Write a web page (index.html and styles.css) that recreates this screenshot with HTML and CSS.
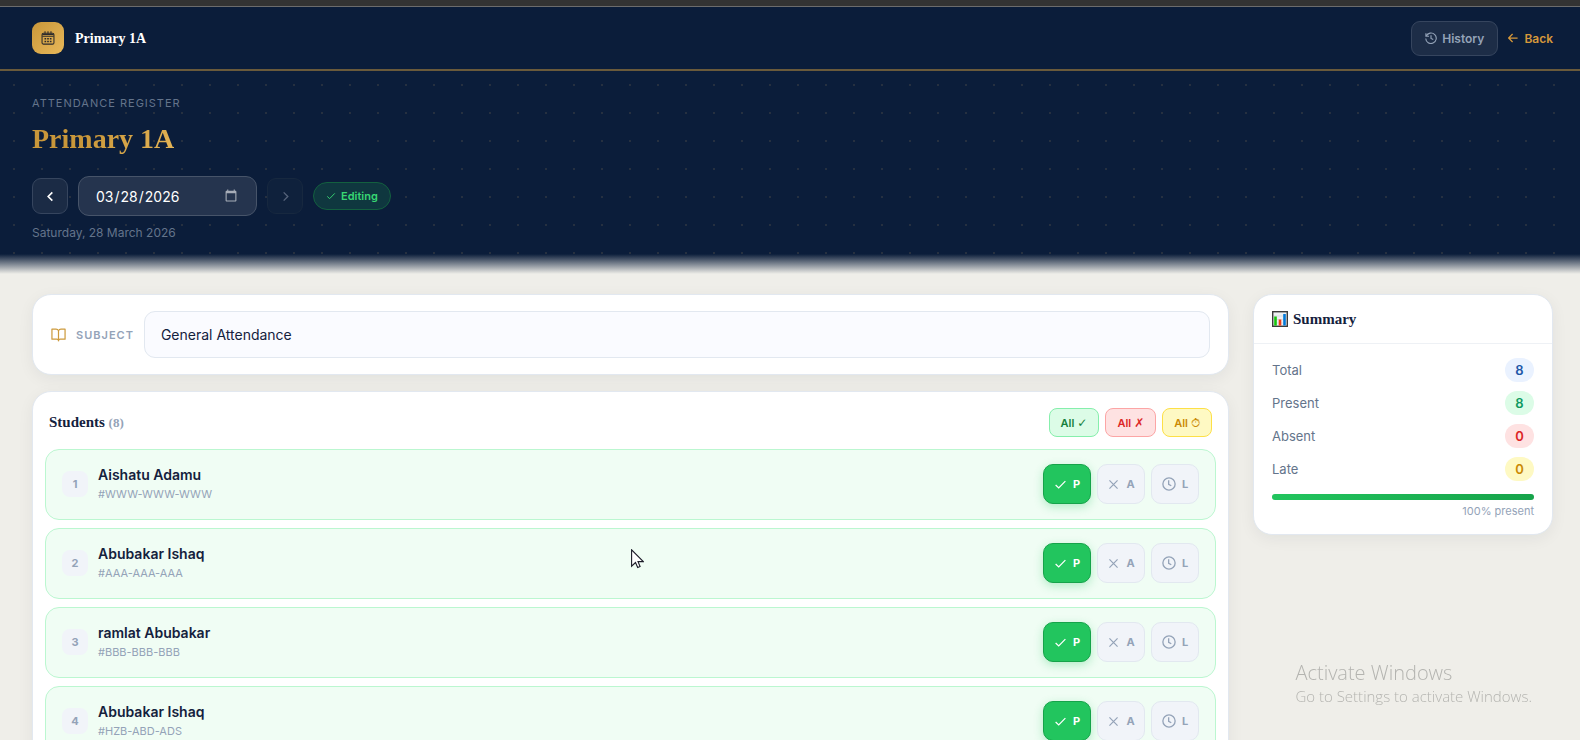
FILE: index.html
```html
<!DOCTYPE html>
<html lang="en">
<head>
<meta charset="utf-8">
<title>Attendance Register – Primary 1A</title>
<meta name="viewport" content="width=device-width, initial-scale=1">
<link rel="stylesheet" href="styles.css">
</head>
<body>
<svg class="defs" aria-hidden="true">
  <symbol id="check" viewBox="0 0 16 16"><path d="M2 8.6 5.8 12.2 14 3.8"/></symbol>
  <symbol id="cross" viewBox="0 0 16 16"><path d="M3 3l10 10M13 3 3 13"/></symbol>
  <symbol id="clock" viewBox="0 0 16 16"><circle cx="8" cy="8" r="7"/><path d="M7.6 3.8v4.5l3 1.7"/></symbol>
</svg>
<div class="strip"></div>
<header class="topbar">
  <div class="brand">
    <span class="brand-logo">
      <svg viewBox="0 0 16 16" width="14" height="14" fill="none" stroke="#2b2a2c" stroke-width="1.2"><rect x="1.2" y="2.6" width="13.6" height="12.4" rx="1.6"/><path d="M1.500 4h13M1.500 6h13M4.600.4v2.600M8 .4v2.600M11.400.4v2.600"/><path d="M4 8.900h1.900M7.050 8.900h1.900M10.100 8.900H12M4 11.900h1.900M7.050 11.900h1.900M10.100 11.900H12" stroke-width="1.700"/></svg>
    </span>
    <span class="brand-name">Primary 1A</span>
  </div>
  <nav class="nav">
    <button class="history" type="button">
      <svg viewBox="0 0 16 16" width="12" height="12" fill="none" stroke="currentColor" stroke-width="1.5"><path d="M1.2 1.5v4.2h4.2M1.6 5.5A7 7 0 1 1 1 8.6"/><path d="M8 4.2v4.3l3 1.6"/></svg>
      History
    </button>
    <a class="back" href="#">
      <svg viewBox="0 0 12 12" width="10" height="10" fill="none" stroke="currentColor" stroke-width="1.5"><path d="M11.5 6H1M5.5 1.2.8 6l4.7 4.8"/></svg>
      Back
    </a>
  </nav>
</header>
<section class="hero">
  <p class="eyebrow">Attendance Register</p>
  <h1 class="title">Primary 1A</h1>
  <div class="date-row">
    <button class="step" type="button" aria-label="Previous day"><svg viewBox="0 0 12 12" width="11" height="11" fill="none" stroke="currentColor" stroke-width="1.8"><path d="M8 1.5 3.5 6 8 10.5"/></svg></button>
    <input class="date" type="date" value="2026-03-28" aria-label="Attendance date">
    <button class="step step-off" type="button" aria-label="Next day" disabled><svg viewBox="0 0 12 12" width="11" height="11" fill="none" stroke="currentColor" stroke-width="1.5"><path d="M4 1.5 8.5 6 4 10.5"/></svg></button>
    <span class="editing"><svg class="line-icon" width="10" height="10"><use href="#check"/></svg>Editing</span>
  </div>
  <p class="long-date">Saturday, 28 March 2026</p>
</section>
<main class="content">
  <div class="column">
    <section class="card subject">
      <svg viewBox="0 0 16 14" width="15" height="14" fill="none" stroke="#cd9a3c" stroke-width="1.3" stroke-linejoin="round"><path d="M8 2.600C7.500 1.400 6.600.8 5.400.8H1v10.600h5c1.100 0 2 .6 2 1.800 0-1.200.9-1.800 2-1.800h5V.8h-4.400C9.400.8 8.500 1.400 8 2.600zv11"/></svg>
      <label class="subject-label" for="subject">Subject</label>
      <select class="subject-select" id="subject"><option>General Attendance</option></select>
    </section>
    <section class="card students">
      <div class="students-head">
        <h2 class="card-title">Students <span class="count">(8)</span></h2>
        <div class="bulk">
          <button class="bulk-btn green" type="button">All <span class="glyph">✓</span></button>
          <button class="bulk-btn red" type="button">All <span class="glyph">✗</span></button>
          <button class="bulk-btn yellow" type="button">All <span class="glyph">⏱</span></button>
        </div>
      </div>
      <ul class="list">
        <li class="row">
          <span class="num">1</span>
          <div class="who"><span class="name">Aishatu Adamu</span><span class="code">#WWW-WWW-WWW</span></div>
          <div class="marks">
            <button class="mark on" type="button"><svg class="line-icon" width="13" height="13"><use href="#check"/></svg>P</button>
            <button class="mark" type="button"><svg class="line-icon" width="13" height="13"><use href="#cross"/></svg>A</button>
            <button class="mark" type="button"><svg class="line-icon" width="14" height="14"><use href="#clock"/></svg>L</button>
          </div>
        </li>
        <li class="row">
          <span class="num">2</span>
          <div class="who"><span class="name">Abubakar Ishaq</span><span class="code">#AAA-AAA-AAA</span></div>
          <div class="marks">
            <button class="mark on" type="button"><svg class="line-icon" width="13" height="13"><use href="#check"/></svg>P</button>
            <button class="mark" type="button"><svg class="line-icon" width="13" height="13"><use href="#cross"/></svg>A</button>
            <button class="mark" type="button"><svg class="line-icon" width="14" height="14"><use href="#clock"/></svg>L</button>
          </div>
        </li>
        <li class="row">
          <span class="num">3</span>
          <div class="who"><span class="name">ramlat Abubakar</span><span class="code">#BBB-BBB-BBB</span></div>
          <div class="marks">
            <button class="mark on" type="button"><svg class="line-icon" width="13" height="13"><use href="#check"/></svg>P</button>
            <button class="mark" type="button"><svg class="line-icon" width="13" height="13"><use href="#cross"/></svg>A</button>
            <button class="mark" type="button"><svg class="line-icon" width="14" height="14"><use href="#clock"/></svg>L</button>
          </div>
        </li>
        <li class="row">
          <span class="num">4</span>
          <div class="who"><span class="name">Abubakar Ishaq</span><span class="code">#HZB-ABD-ADS</span></div>
          <div class="marks">
            <button class="mark on" type="button"><svg class="line-icon" width="13" height="13"><use href="#check"/></svg>P</button>
            <button class="mark" type="button"><svg class="line-icon" width="13" height="13"><use href="#cross"/></svg>A</button>
            <button class="mark" type="button"><svg class="line-icon" width="14" height="14"><use href="#clock"/></svg>L</button>
          </div>
        </li>
      </ul>
    </section>
  </div>
  <aside class="card summary">
    <h2 class="card-title summary-title">
      <svg viewBox="0 0 16 16" width="16" height="16"><rect x=".7" y=".7" width="14.600" height="14.600" fill="#eef0f2" stroke="#3b3b3b" stroke-width="1.400"/><path d="M2 5h12M2 8.500h12M2 12h12" stroke="#cfd4d9" stroke-width=".6"/><path d="M2.200 5.500h2.600V14.600H2.200z" fill="#16c60c"/><path d="M6.700 8.500h2.600v6.100H6.700z" fill="#f03a17"/><path d="M11.200 3h2.600v11.600h-2.600z" fill="#0078d7"/></svg>
      Summary
    </h2>
    <dl class="stats">
      <div class="stat"><dt>Total</dt><dd class="pill blue">8</dd></div>
      <div class="stat"><dt>Present</dt><dd class="pill green-pill">8</dd></div>
      <div class="stat"><dt>Absent</dt><dd class="pill red-pill">0</dd></div>
      <div class="stat"><dt>Late</dt><dd class="pill yellow-pill">0</dd></div>
    </dl>
    <div class="progress"><div class="progress-fill" style="width:100%"></div></div>
    <p class="progress-text">100% present</p>
  </aside>
</main>
<div class="watermark"><p class="wm-title">Activate Windows</p><p class="wm-text">Go to Settings to activate Windows.</p></div>
<svg class="cursor" viewBox="0 0 13 20" width="13" height="20"><path d="M.6.8v16.400l3.900-3.700 2.200 5 2.400-1-2.100-4.900h5.300z" fill="#fff" stroke="#1c1c28" stroke-width="1.100"/></svg>
</body>
</html>
```
FILE: styles.css
```css
* { box-sizing: border-box; }

html { height: 100%; overflow: hidden; }

body {
  margin: 0;
  height: 100%;
  overflow: hidden;
  background: #efeee9;
  color: #14213d;
  font-family: Inter, "Liberation Sans", sans-serif;
  font-size: 13px;
}

p, h1, h2, ul, dl, dd { margin: 0; padding: 0; }
button, input, select { font: inherit; }
svg { flex: none; }

.defs { display: none; }
.line-icon { fill: none; stroke: currentColor; stroke-width: 1.5; }

.strip { height: 7px; background: #333; border-bottom: 1px solid #6c6c6c; }

.topbar {
  display: flex;
  align-items: center;
  justify-content: space-between;
  height: 64px;
  padding: 0 27px 0 32px;
  background: #0b1d3a;
  border-bottom: 2px solid #6a5a3b;
}
.brand { display: flex; align-items: center; gap: 11px; }
.brand-logo {
  display: grid;
  place-items: center;
  width: 32px;
  height: 32px;
  border-radius: 9px;
  background: linear-gradient(135deg, #c9973a, #e8b85a);
}
.brand-name {
  padding-top: 2px;
  color: #fff;
  font: bold 14px/20px "Liberation Serif", serif;
}
.nav { display: flex; align-items: center; gap: 10px; font-size: 12px; font-weight: 600; }
.history {
  display: flex;
  align-items: center;
  gap: 5px;
  height: 35px;
  padding: 0 13px;
  border: 1px solid #36455e;
  border-radius: 9px;
  background: #1d2d47;
  color: #94a3b8;
}
.back { display: flex; align-items: center; gap: 6px; color: #d6983a; text-decoration: none; }

.hero {
  position: relative;
  height: 203px;
  padding: 24px 32px 0;
  background: radial-gradient(circle, #263040 1px, transparent 1px) 0 0 / 28px 28px, #0b1d3a;
  color: #64748b;
}
.hero::after {
  content: "";
  position: absolute;
  inset: auto 0 0;
  height: 20px;
  background: linear-gradient(to bottom, #0b1d3a, #efeee9);
}
.eyebrow { font-size: 11px; line-height: 16px; letter-spacing: 1px; text-transform: uppercase; }
.title {
  width: max-content;
  margin-top: 8px;
  font: bold 28px/40px "Liberation Serif", serif;
  background: linear-gradient(135deg, #c9973a 40%, #e8b85a);
  background-clip: text;
  color: transparent;
}
.date-row { display: flex; align-items: center; gap: 10px; margin-top: 17px; }
.step {
  display: grid;
  place-items: center;
  width: 36px;
  height: 36px;
  padding: 0;
  border: 1px solid #36455e;
  border-radius: 9px;
  background: #1b2b45;
  color: #fff;
}
.step-off { border-color: #17283f; background: #0f213c; color: #56637a; }
.date {
  width: 179px;
  height: 40px;
  padding: 0 16px;
  border: 1px solid #475469;
  border-radius: 11px;
  background: #25344e;
  color: #fff;
  color-scheme: dark;
  font-size: 14px;
}
.date::-webkit-calendar-picker-indicator { opacity: .6; }
.editing {
  display: flex;
  align-items: center;
  gap: 5px;
  height: 28px;
  padding: 0 12px;
  border: 1px solid #13603f;
  border-radius: 14px;
  background: #0f373f;
  color: #38d673;
  font-size: 11px;
  font-weight: 600;
}
.long-date { margin-top: 9px; font-size: 12px; line-height: 16px; }

.content {
  display: grid;
  grid-template-columns: minmax(0, 1fr) 300px;
  align-items: start;
  gap: 24px;
  padding: 20px 27px 0 32px;
}
.column { display: grid; gap: 16px; }
.card {
  border: 1px solid #e2e8f0;
  border-radius: 19px;
  background: #fff;
  box-shadow: 0 4px 16px rgba(11, 29, 58, .06);
}
.card-title { font: bold 15px/20px "Liberation Serif", serif; }

.subject { display: flex; align-items: center; gap: 10px; padding: 16px 18px; }
.subject-label { color: #94a3b8; font-size: 11px; font-weight: 600; letter-spacing: 1px; text-transform: uppercase; }
.subject-select {
  appearance: none;
  flex: 1;
  min-width: 0;
  height: 47px;
  padding: 0 16px;
  border: 1px solid #e2e8f0;
  border-radius: 11px;
  background: #fafbff;
  color: #14213d;
  font-size: 14px;
}

.students { padding: 16px 12px; }
.students-head { display: flex; align-items: center; justify-content: space-between; padding: 0 4px; }
.count { color: #94a3b8; font-size: 13px; }
.bulk { display: flex; gap: 6px; }
.bulk-btn {
  display: flex;
  align-items: center;
  gap: 3px;
  height: 29px;
  padding: 0 11px;
  border: 1px solid;
  border-radius: 8px;
  font-size: 11px;
  font-weight: 600;
}
.glyph { font: 12px/16px "DejaVu Sans", sans-serif; }
.green { border-color: #86efac; background: #dcfce7; color: #15803d; }
.red { border-color: #fca5a5; background: #fee2e2; color: #dc2626; }
.yellow { border-color: #fde047; background: #fef9c3; color: #ca8a04; }

.list { display: grid; gap: 8px; margin-top: 12px; list-style: none; }
.row {
  display: flex;
  align-items: center;
  gap: 10px;
  height: 71px;
  padding: 0 16px 1px;
  border: 1px solid #bbf7d0;
  border-radius: 14px;
  background: #f0fdf4;
}
.num {
  display: grid;
  place-items: center;
  width: 26px;
  height: 26px;
  border-radius: 8px;
  background: #f1f4f9;
  color: #94a3b8;
  font-size: 11px;
  font-weight: 700;
}
.who { display: grid; flex: 1; }
.name { font-size: 14px; font-weight: 600; line-height: 20px; }
.code { color: #94a3b8; font-size: 11px; line-height: 18px; }
.marks { display: flex; gap: 6px; }
.mark {
  display: flex;
  align-items: center;
  justify-content: center;
  gap: 6px;
  width: 48px;
  height: 40px;
  padding: 0;
  border: 1px solid #e2e8f0;
  border-radius: 10px;
  background: #f1f4f9;
  color: #94a3b8;
  font-size: 11px;
  font-weight: 700;
}
.on {
  border-color: #16a34a;
  background: #22c55e;
  color: #fff;
  box-shadow: 0 3px 10px rgba(34, 197, 94, .3);
}

.summary { padding-bottom: 15px; }
.summary-title {
  display: flex;
  align-items: center;
  gap: 5px;
  padding: 14px 18px;
  border-bottom: 1px solid #eef1f5;
}
.stats { display: grid; gap: 9px; padding: 14px 18px 0; }
.stat { display: flex; align-items: center; justify-content: space-between; color: #64748b; }
.pill { min-width: 29px; border-radius: 12px; font-weight: 600; line-height: 24px; text-align: center; }
.blue { background: #eaf2ff; color: #1e57a8; }
.green-pill { background: #dcfce7; color: #0f9960; }
.red-pill { background: #fee2e2; color: #dc2626; }
.yellow-pill { background: #fef9c3; color: #ca8a04; }
.progress { height: 6px; margin: 13px 18px 0; border-radius: 3px; background: #eef1f5; }
.progress-fill { height: 100%; border-radius: 3px; background: linear-gradient(to right, #22c55e, #16a34a); }
.progress-text { margin-top: 3px; padding-right: 18px; color: #94a3b8; font-size: 11px; line-height: 16px; text-align: right; }

.watermark {
  position: fixed;
  right: 48px;
  bottom: 34px;
  color: #b4b4b0;
  font-family: "Open Sans", sans-serif;
  font-weight: 300;
}
.wm-title { font-size: 20px; line-height: 26px; }
.wm-text { font-size: 15px; line-height: 20px; }
.cursor { position: fixed; left: 631px; top: 549px; }
```
